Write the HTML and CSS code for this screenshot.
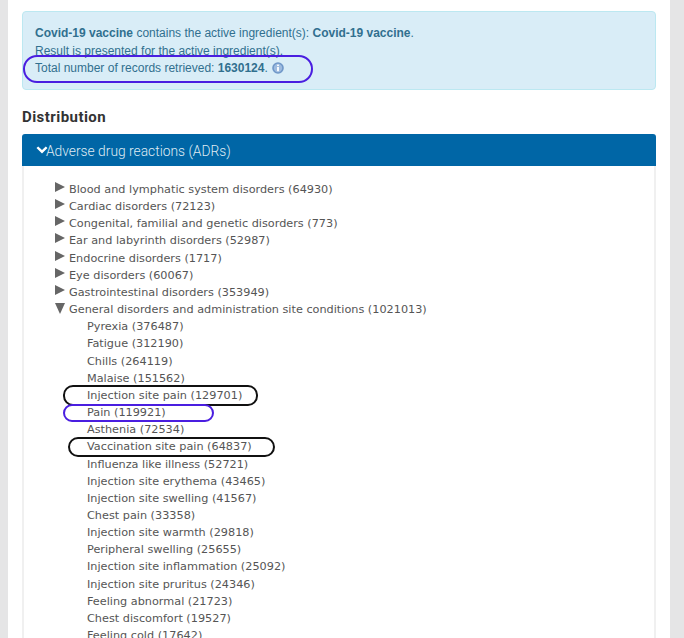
FILE: index.html
```html
<!DOCTYPE html>
<html>
<head>
    <title>Distribution</title>
    <link rel="stylesheet" href="styles.css">
</head>
<body>
    <div id="container">
        <div class="alert">
            <b>Covid-19 vaccine</b> contains the active ingredient(s): <b>Covid-19 vaccine</b>.<br>
            Result is presented for the active ingredient(s).<br>
            Total number of records retrieved: <b>1630124</b>.
            <svg class="info" width="12" height="12" viewBox="0 0 12 12">
                <circle cx="6" cy="6" r="5.8" fill="#6f97c8"/>
                <circle cx="6" cy="6" r="4.2" fill="#9dbbdf"/>
                <rect x="5.1" y="5" width="1.8" height="4.2" fill="#fff"/>
                <rect x="5.1" y="2.6" width="1.8" height="1.5" fill="#fff"/>
            </svg>
            <span class="oval oval-total"></span>
        </div>

        <h2>Distribution</h2>

        <div class="panel">
            <div class="panel-head">
                <svg class="chevron" width="12" height="8" viewBox="0 0 12 8">
                    <path d="M0.5 2 L2.2 0.4 L6 4 L9.8 0.4 L11.5 2 L6 7.4 Z" fill="#fff"/>
                </svg>Adverse drug reactions (ADRs)
            </div>
            <div class="panel-body">
                <ul class="tree">
                    <li><i class="arrow"></i>Blood and lymphatic system disorders (64930)</li>
                    <li><i class="arrow"></i>Cardiac disorders (72123)</li>
                    <li><i class="arrow"></i>Congenital, familial and genetic disorders (773)</li>
                    <li><i class="arrow"></i>Ear and labyrinth disorders (52987)</li>
                    <li><i class="arrow"></i>Endocrine disorders (1717)</li>
                    <li><i class="arrow"></i>Eye disorders (60067)</li>
                    <li><i class="arrow"></i>Gastrointestinal disorders (353949)</li>
                    <li><i class="arrow open"></i>General disorders and administration site conditions (1021013)
                        <ul class="sub">
                            <li>Pyrexia (376487)</li>
                            <li>Fatigue (312190)</li>
                            <li>Chills (264119)</li>
                            <li>Malaise (151562)</li>
                            <li>Injection site pain (129701)<span class="oval oval-injection"></span></li>
                            <li>Pain (119921)<span class="oval oval-pain"></span></li>
                            <li>Asthenia (72534)</li>
                            <li>Vaccination site pain (64837)<span class="oval oval-vaccination"></span></li>
                            <li>Influenza like illness (52721)</li>
                            <li>Injection site erythema (43465)</li>
                            <li>Injection site swelling (41567)</li>
                            <li>Chest pain (33358)</li>
                            <li>Injection site warmth (29818)</li>
                            <li>Peripheral swelling (25655)</li>
                            <li>Injection site inflammation (25092)</li>
                            <li>Injection site pruritus (24346)</li>
                            <li>Feeling abnormal (21723)</li>
                            <li>Chest discomfort (19527)</li>
                            <li>Feeling cold (17642)</li>
                        </ul>
                    </li>
                </ul>
            </div>
        </div>
    </div>
</body>
</html>
```

FILE: styles.css
```css
html, body {
    height: 100%;
    overflow: hidden;
}

body {
    margin: 0;
    background-color: #e5e5e6;
    padding: 0 14px 0 8px;
    font-family: "Liberation Sans", Arial, sans-serif;
}

#container {
    background-color: #fff;
    height: 100%;
    overflow: hidden;
    padding: 11px 14px 0 14px;
    box-sizing: border-box;
}

.alert {
    position: relative;
    background-color: #d9edf7;
    border: 1px solid #bce8f1;
    border-radius: 4px;
    color: #31708f;
    font-size: 12px;
    line-height: 17.5px;
    padding: 13px 12px 12px 12px;
    height: 79px;
    box-sizing: border-box;
}

.info {
    vertical-align: -2px;
    margin-left: 1px;
}

h2 {
    margin: 18px 0 7px 0;
    font-family: Roboto, sans-serif;
    font-size: 15px;
    line-height: 19px;
    font-weight: 700;
    letter-spacing: 0.45px;
    color: #333;
}

.panel {
    border-radius: 4px 4px 0 0;
}

.panel-head {
    background-color: #0066a6;
    color: #dfeaf3;
    font-family: Roboto, sans-serif;
    font-weight: 300;
    font-size: 13.8px;
    line-height: 34px;
    height: 32px;
    padding-left: 14px;
    border-radius: 3px 3px 0 0;
}

.chevron {
    vertical-align: 2px;
    margin-right: -2px;
}

.panel-body {
    border-left: 2px solid #f0f0f0;
    border-right: 2px solid #f0f0f0;
    padding: 15px 0 0 31px;
    height: 600px;
}

.tree, .sub {
    list-style: none;
    margin: 0;
    padding: 0;
    font-family: "DejaVu Sans", Verdana, sans-serif;
    font-size: 11.25px;
    line-height: 17.15px;
    color: #555;
}

.sub {
    padding-left: 18px;
}

.sub li {
    position: relative;
}

.tree > li {
    position: relative;
    padding-left: 14px;
}

.arrow {
    position: absolute;
    left: 0;
    top: 1px;
    width: 0;
    height: 0;
    border-style: solid;
    border-width: 5.5px 0 5.5px 10px;
    border-color: transparent transparent transparent #666;
}

.arrow.open {
    left: 0;
    top: 2px;
    border-width: 11px 5.5px 0 5.5px;
    border-color: #666 transparent transparent transparent;
}

.oval {
    position: absolute;
    box-sizing: border-box;
    border: 2px solid #111;
    border-radius: 10px;
}

.oval-total {
    left: 0;
    top: 43px;
    width: 290px;
    height: 28px;
    border-color: #4a1ee0;
    border-radius: 14px;
}

.oval-injection {
    left: -24px;
    top: -2px;
    width: 195px;
    height: 21px;
}

.oval-pain {
    left: -24px;
    top: 0;
    width: 151px;
    height: 18px;
    border-color: #4a1ee0;
}

.oval-vaccination {
    left: -19px;
    top: -1px;
    width: 207px;
    height: 20px;
}
```
